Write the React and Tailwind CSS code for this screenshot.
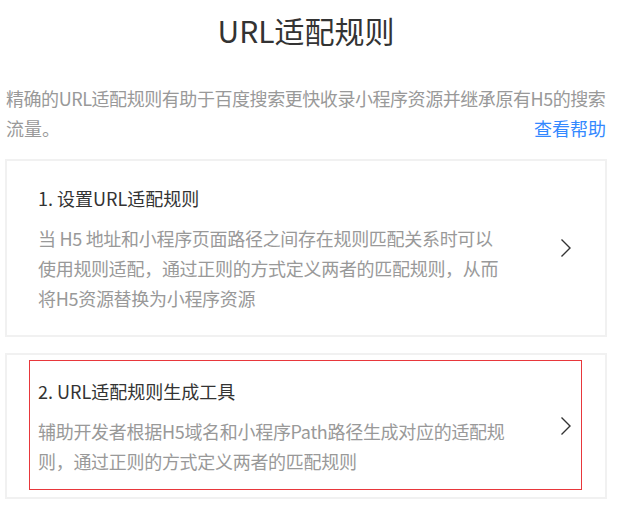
import React from 'react';

const ChevronRight = () => (
  <svg width="12" height="20" viewBox="0 0 12 20" fill="none" className="shrink-0">
    <path d="M1.5 1.5 L10 10 L1.5 18.5" stroke="#333" strokeWidth="1.4" />
  </svg>
);

const RuleCard = ({ title, lines, className = '', children }) => (
  <div className={`relative ml-[5px] w-[602px] border-2 border-[#f1f1f1] bg-white flex items-center ${className}`}>
    <div className="flex-1 pl-[31px]">
      <div className="text-[18px] leading-[30px] text-[#333] whitespace-nowrap">{title}</div>
      <div className="mt-[10px] text-[18px] leading-[30px] text-[#999] tracking-[-0.3px]">
        {lines.map((line, i) => (
          <div key={i} className="whitespace-nowrap">{line}</div>
        ))}
      </div>
    </div>
    <div className="pr-[33px]">
      <ChevronRight />
    </div>
    {children}
  </div>
);

const App = () => {
  return (
    <div
      className="w-[626px] h-[512px] bg-white overflow-hidden"
      style={{ fontFamily: '"Noto Sans CJK SC", "Noto Sans", sans-serif' }}
    >
      {/* Header */}
      <div className="h-[60px] w-[600px] ml-[6px] flex items-center justify-center">
        <h1 className="text-[30px] leading-[40px] text-[#333] font-normal">URL适配规则</h1>
      </div>

      {/* Intro */}
      <div className="mt-[23px] ml-[6px] w-[600px] text-[18px] leading-[30px] text-[#999]">
        <div className="whitespace-nowrap tracking-[-0.44px]">精确的URL适配规则有助于百度搜索更快收录小程序资源并继承原有H5的搜索</div>
        <div className="flex justify-between">
          <span>流量。</span>
          <a className="text-[#3388ff] cursor-pointer">查看帮助</a>
        </div>
      </div>

      {/* Cards */}
      <div className="mt-[16px] flex flex-col gap-[16px]">
        <RuleCard
          className="h-[178px]"
          title="1. 设置URL适配规则"
          lines={[
            '当 H5 地址和小程序页面路径之间存在规则匹配关系时可以',
            '使用规则适配，通过正则的方式定义两者的匹配规则，从而',
            '将H5资源替换为小程序资源'
          ]}
        />
        <RuleCard
          className="h-[146px]"
          title="2. URL适配规则生成工具"
          lines={[
            '辅助开发者根据H5域名和小程序Path路径生成对应的适配规',
            '则，通过正则的方式定义两者的匹配规则'
          ]}
        >
          <div className="absolute left-[22px] top-[5px] w-[553px] h-[130px] border border-[#e8373b] pointer-events-none" />
        </RuleCard>
      </div>
    </div>
  );
};

export default App;
